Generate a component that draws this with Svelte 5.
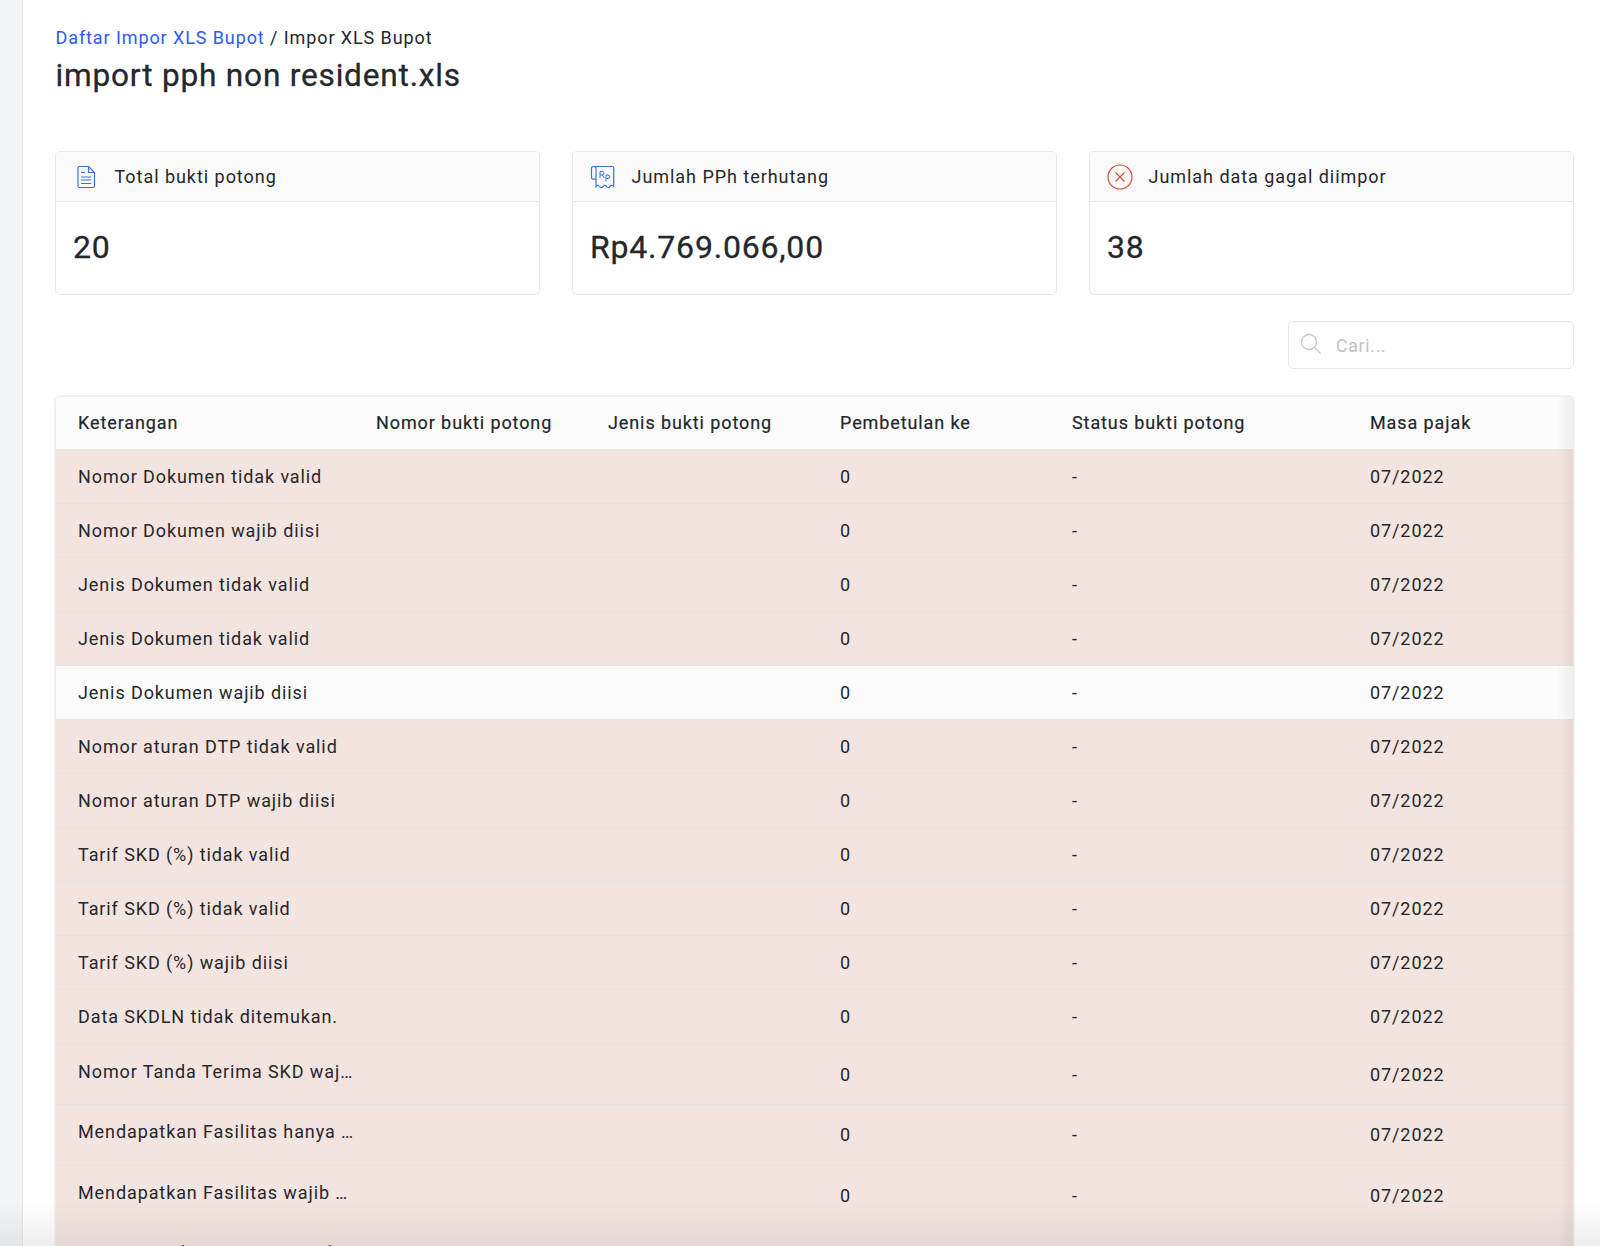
<script>
    const cards = [
        { icon: "doc", label: "Total bukti potong", value: "20" },
        { icon: "rp", label: "Jumlah PPh terhutang", value: "Rp4.769.066,00" },
        { icon: "err", label: "Jumlah data gagal diimpor", value: "38" },
    ];

    const columns = ["Keterangan", "Nomor bukti potong", "Jenis bukti potong", "Pembetulan ke", "Status bukti potong", "Masa pajak"];

    const rows = [
        { text: "Nomor Dokumen tidak valid" },
        { text: "Nomor Dokumen wajib diisi" },
        { text: "Jenis Dokumen tidak valid" },
        { text: "Jenis Dokumen tidak valid" },
        { text: "Jenis Dokumen wajib diisi", ok: true },
        { text: "Nomor aturan DTP tidak valid" },
        { text: "Nomor aturan DTP wajib diisi" },
        { text: "Tarif SKD (%) tidak valid" },
        { text: "Tarif SKD (%) tidak valid" },
        { text: "Tarif SKD (%) wajib diisi" },
        { text: "Data SKDLN tidak ditemukan." },
        { text: "Nomor Tanda Terima SKD wajib diisi", long: true },
        { text: "Mendapatkan Fasilitas hanya boleh diisi", long: true },
        { text: "Mendapatkan Fasilitas wajib diisi", long: true },
        { text: "Nomor Tanda Terima SKD tidak valid", long: true },
    ];
</script>

<div class="page">
    <aside class="rail"></aside>
    <main class="content">
        <div class="crumbs"><a href="#top">Daftar Impor XLS Bupot</a> / Impor XLS Bupot</div>
        <h1>import pph non resident.xls</h1>

        <section class="cards">
            {#each cards as card}
                <div class="card">
                    <div class="card-head">
                        <div class="icon">
                            {#if card.icon === "doc"}
                                <svg width="20" height="24" viewBox="0 0 20 24" fill="none" stroke="#3b6fd4" stroke-width="1.2">
                                    <path d="M3.500 1.500h9l6 6v13.500a1.500 1.500 0 0 1-1.500 1.500h-13.500a1.500 1.500 0 0 1-1.500-1.500v-18a1.500 1.500 0 0 1 1.500-1.500z" />
                                    <path d="M12.500 1.500v6h6M5 7.500h4M5 12h10M5 15h10M5 18.500h10" />
                                </svg>
                            {:else if card.icon === "rp"}
                                <svg width="26" height="24" viewBox="0 0 26 24" fill="none" stroke="#3b6fd4" stroke-width="1.2">
                                    <path d="M6 16V3.500A1.800 1.800 0 0 0 4.200 1.500h-1A1.700 1.700 0 0 0 1.500 3.200v9.300c0 1 .7 1.600 1.600 1.600H6" />
                                    <path d="M4.200 1.500h18a1.500 1.500 0 0 1 1.500 1.500v18.500" />
                                    <path d="M6 16v5.500c1.500-1.700 2.300-1.700 3.500 0 1.200 1.500 2.200 1.500 3.500 0 1.200-1.500 2.200-1.500 3.500 0 1.200 1.500 2.200 1.500 3.500 0 1.200-1.500 2.200-1.500 3.700 0" />
                                    <path d="M10 13V6.500h2.200a1.700 1.700 0 0 1 0 3.500H10M12.400 10l1.800 3M16 16.500V10h2a1.500 1.500 0 0 1 0 3.500h-2" stroke-width="1" />
                                </svg>
                            {:else}
                                <svg width="26" height="26" viewBox="0 0 26 26" fill="none" stroke="#d9503a" stroke-width="1.2">
                                    <circle cx="13" cy="13" r="12" />
                                    <path d="M8.500 8.500l9 9M17.500 8.500l-9 9" />
                                </svg>
                            {/if}
                        </div>
                        <span>{card.label}</span>
                    </div>
                    <div class="card-value">{card.value}</div>
                </div>
            {/each}
        </section>

        <div class="tools">
            <label class="search">
                <svg width="22" height="22" viewBox="0 0 22 22" fill="none" stroke="#c4c7cc" stroke-width="1.3">
                    <circle cx="9" cy="9" r="7.500" />
                    <path d="M14.500 14.500l6 6" />
                </svg>
                <input type="text" placeholder="Cari..." />
            </label>
        </div>

        <div class="table-wrap">
            <table>
                <colgroup>
                    <col style="width: 298px" />
                    <col style="width: 232px" />
                    <col style="width: 232px" />
                    <col style="width: 232px" />
                    <col style="width: 298px" />
                    <col />
                </colgroup>
                <thead>
                    <tr>
                        {#each columns as col}
                            <th>{col}</th>
                        {/each}
                    </tr>
                </thead>
                <tbody>
                    {#each rows as row}
                        <tr class:ok={row.ok} class:long={row.long}>
                            <td>
                                {#if row.long}
                                    <div class="clip">{row.text}</div>
                                {:else}
                                    {row.text}
                                {/if}
                            </td>
                            <td></td>
                            <td></td>
                            <td>0</td>
                            <td>-</td>
                            <td>07/2022</td>
                        </tr>
                    {/each}
                </tbody>
            </table>
            <div class="edge"></div>
        </div>
    </main>
    <div class="fade"></div>
</div>

<style>
    :global(body) {
        margin: 0;
        background: #fff;
    }

    .page {
        display: flex;
        position: relative;
        height: 1246px;
        overflow: hidden;
        font-family: Roboto, "Liberation Sans", sans-serif;
        color: #24272b;
        letter-spacing: 0.05em;
    }

    .rail {
        flex: 0 0 22px;
        background: #f2f4f8;
        border-right: 1px solid #e6e7ea;
    }

    .content {
        flex: 1;
        min-width: 0;
        padding: 26px 26px 0 32px;
    }

    .crumbs {
        padding-left: 0.5px;
        font-size: 18px;
        line-height: 23px;
        letter-spacing: 0.905px;
    }

    .crumbs a {
        color: #2a5cf5;
        text-decoration: none;
    }

    h1 {
        margin: 7px 0 0;
        padding-left: 0.5px;
        font-size: 31.6px;
        line-height: 40px;
        font-weight: 400;
        -webkit-text-stroke: 0.3px #25282b;
        color: #25282b;
    }

    .cards {
        display: grid;
        grid-template-columns: repeat(3, 1fr);
        gap: 32px;
        margin-top: 55px;
    }

    .card {
        height: 144px;
        box-sizing: border-box;
        border: 1px solid #e7e8ea;
        border-radius: 5px;
        overflow: hidden;
    }

    .card-head {
        display: flex;
        align-items: center;
        gap: 16px;
        height: 49px;
        padding: 0 16px 0 16.5px;
        background: #fafafa;
        border-bottom: 1px solid #e5e6e8;
        font-size: 18px;
        letter-spacing: 0.96px;
    }

    .icon {
        display: flex;
        justify-content: center;
        flex: 0 0 26px;
    }

    .card-value {
        padding: 26px 16px 26px 17px;
        font-size: 32px;
        line-height: 38px;
        -webkit-text-stroke: 0.3px #24272b;
    }

    .tools {
        display: flex;
        justify-content: flex-end;
        margin-top: 26px;
    }

    .search {
        display: flex;
        align-items: center;
        gap: 14px;
        width: 286px;
        height: 48px;
        box-sizing: border-box;
        padding: 0 11px;
        border: 1px solid #e7e8ea;
        border-radius: 5px;
    }

    .search svg {
        flex: none;
        margin-top: -3px;
    }

    .search input {
        flex: 1;
        min-width: 0;
        margin-top: 2px;
        border: none;
        outline: none;
        padding: 0;
        font: inherit;
        font-size: 17.5px;
        letter-spacing: inherit;
        color: #24272b;
    }

    .search input::placeholder {
        color: #bfc1c4;
        opacity: 1;
    }

    .table-wrap {
        position: relative;
        margin-top: 27px;
        border: 1px solid #ececee;
        border-bottom: none;
        border-radius: 5px 5px 0 0;
        box-shadow: 0 0 0 1px #f2f2f3;
        overflow: hidden;
    }

    table {
        width: 100%;
        table-layout: fixed;
        border-collapse: collapse;
        font-size: 18px;
        letter-spacing: 0.9px;
    }

    th {
        height: 52px;
        padding: 0 0 0 22px;
        box-sizing: border-box;
        text-align: left;
        font-weight: 400;
        -webkit-text-stroke: 0.2px #24272b;
        background: #fbfbfb;
        border-bottom: 1px solid #e5e6e8;
    }

    td {
        height: 54.1px;
        padding: 0 0 0 22px;
        box-sizing: border-box;
        background: #f4e4e0;
        border-bottom: 1px solid #e4e3e7;
    }

    tr.ok td {
        background: #fbfbfb;
        border-bottom-color: #e5e6e8;
    }

    tr.long td {
        height: 60.5px;
    }

    .clip {
        width: 278px;
        margin-bottom: 6px;
        overflow: hidden;
        white-space: nowrap;
        text-overflow: ellipsis;
    }

    .edge {
        position: absolute;
        top: 0;
        right: 0;
        bottom: 0;
        width: 16px;
        background: linear-gradient(to right, rgba(0, 0, 0, 0), rgba(0, 0, 0, 0.05));
    }

    .fade {
        position: absolute;
        left: 0;
        right: 0;
        bottom: 0;
        height: 46px;
        background: linear-gradient(to bottom, rgba(120, 120, 120, 0), rgba(120, 120, 120, 0.12));
    }
</style>
